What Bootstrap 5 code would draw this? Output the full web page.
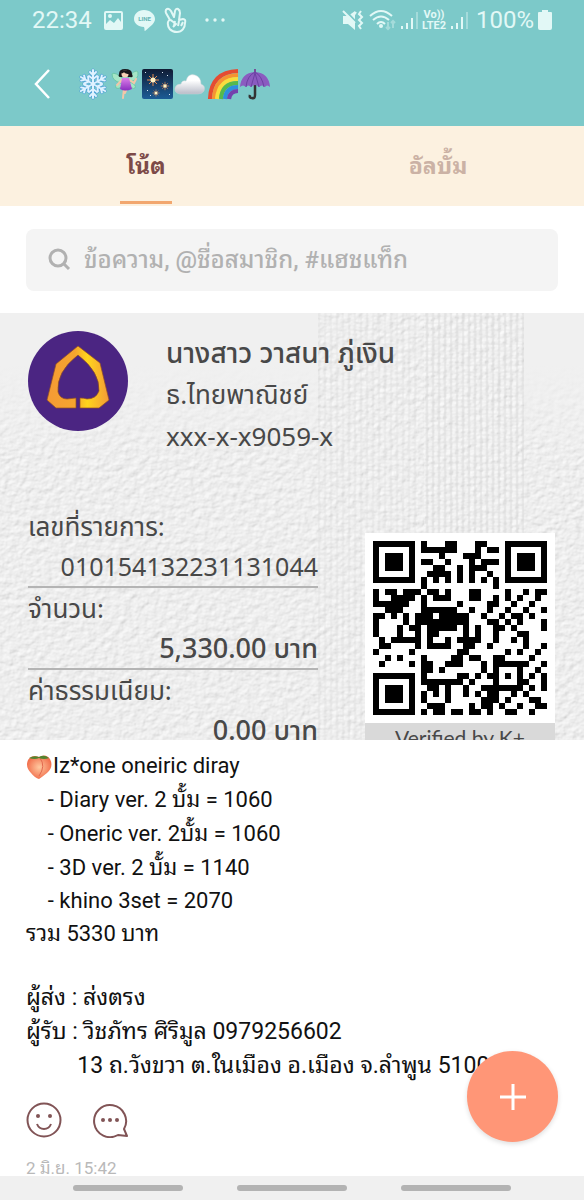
<!DOCTYPE html>
<html lang="th">
<head>
<meta charset="utf-8">
<meta name="viewport" content="width=device-width, initial-scale=1">
<title>โน้ต</title>
<link href="https://cdn.jsdelivr.net/npm/bootstrap@5.3.0/dist/css/bootstrap.min.css" rel="stylesheet">
<style>
  body { font-family: Roboto, "Noto Sans Thai Looped", "Droid Sans Thai", "Noto Sans Thai", "Noto Sans", sans-serif; font-size: 22px; color: #111; background: #fff; }
  .topbar { background: #7cc9c9; color: #e2f8f6; height: 126px; }
  .status { height: 40px; padding: 0 32px; font-size: 24px; line-height: 40px; }
  .alerts { margin-left: 12px; }
  .volte { font-size: 11px; line-height: 11px; font-weight: 700; }
  .room { height: 88px; padding: 0 32px; gap: 26px; }
  .tabs { background: #fcf1e0; height: 80px; }
  .tabs a { color: #cbb2a5; font-size: 23px; font-weight: 700; text-decoration: none; line-height: 82px; }
  .tabs a.active { color: #7d4a48; }
  .tabs a.active::after { content: ""; position: absolute; left: 50%; margin-left: -26px; bottom: 2px; width: 52px; height: 3px; background: #f2a76f; }
  .find { margin: 23px 26px 22px; height: 62px; background: #f4f4f4; border-radius: 8px; padding: 0 22px; }
  .find input { font-size: 24px; font-weight: 500; color: #777; }
  .find input::placeholder { color: #b1b1b1; opacity: 1; }
  .slip { height: 427px; background: #ececec; color: #484848; font-family: "Noto Sans", "Noto Sans Thai", sans-serif; font-size: 26px; overflow: hidden; }
  .paper { inset: 0; }
  .payee { padding: 18px 28px 0; gap: 38px; height: 193px; }
  .payee p { line-height: 42px; margin: 0; }
  .payee .who { font-size: 28px; }
  .facts { width: 290px; margin-left: 28px; }
  .facts dt, .facts dd { margin: 0; font-weight: 400; line-height: 40px; }
  .facts dd { text-align: right; border-bottom: 2px solid #b4b4b4; }
  .facts .ref { font-size: 25px; line-height: 40px; }
  .facts .fw-medium { font-size: 27px; }
  .code { width: 190px; margin: 27px 29px 0 0; }
  .code svg { background: #fff; }
  .code figcaption { background: #d9d9d9; font-size: 21px; line-height: 30px; font-family: Lato, sans-serif; }
  .note { padding: 9px 26px 0; }
  .note p { margin: 0; line-height: 34px; white-space: pre-wrap; }
  .note .latin { line-height: 32px; }
  .note .gap-line { line-height: 30px; }
  .note .parcel { font-size: 23px; white-space: pre; }
  .acts { gap: 31px; padding: 19px 26px 0; }
  .when { color: #b9b9b9; font-size: 17px; line-height: 22px; padding: 19px 26px 40px; }
  .fab { right: 26px; bottom: 58px; width: 91px; height: 91px; background: #ff9677; box-shadow: 0 2px 5px #0002; }
  .sysbar { height: 24px; background: #f0f0f0; }
  .sysbar span { width: 110px; height: 6px; border-radius: 3px; background: #b3b3b3; }
</style>
</head>
<body>
<header class="topbar">
  <div class="status d-flex align-items-center">
    <span>22:34</span>
    <svg class="alerts" width="84" height="26" viewBox="0 0 84 26" aria-hidden="true">
      <path fill="#e2f8f6" fill-rule="evenodd" d="M2 4h15a2 2 0 0 1 2 2v15a2 2 0 0 1-2 2H2a2 2 0 0 1-2-2V6a2 2 0 0 1 2-2zm0 2v11l4-4 4 3 4-5 3 4V6zm4 1a2 2 0 1 1 0 4 2 2 0 0 1 0-4z"/>
      <path fill="#e2f8f6" d="M40 3c6 0 11 4 11 9 0 4-4 7-10 12-1 0 0-2-1-4-6 0-10-4-10-8 0-5 4-9 10-9z"/>
      <text x="40.500" y="14" text-anchor="middle" font-size="6" font-weight="700" fill="#65b5b5">LINE</text>
      <path fill="none" stroke="#e2f8f6" stroke-width="2" stroke-linejoin="round" d="M66 13 62 6q-1-3 1-4t4 2l3 6 1-6q1-3 3-2t2 4l-1 7 4-1q3 0 2 4c0 5-3 9-8 9-6 0-10-4-9-10 1-3 3-2 4-1l4 3-3 3M71 14l-1 5M75 14l-1 5M79 15l-2 4"/>
    </svg>
    <svg class="ms-3" width="24" height="24" viewBox="0 0 24 24" fill="#e2f8f6" aria-hidden="true"><circle cx="3" cy="12" r="1.700"/><circle cx="11" cy="12" r="1.700"/><circle cx="19" cy="12" r="1.700"/></svg>
    <svg class="ms-auto" width="76" height="24" viewBox="0 0 76 24" fill="none" stroke="#e2f8f6" aria-hidden="true">
      <path fill="#e2f8f6" stroke="none" d="M1 8h5l7-5v19l-7-6H1z"/><path stroke="#7cc9c9" stroke-width="2" d="m2 1 12 13"/><path stroke-width="2" d="m1 3 12 12M19 3l-2 3 3 3-3 3 3 3-3 3 2 3"/><path stroke-width="2" d="M14 4l-2 3"/>
      <path stroke-width="2" d="M28 8q11-10 22 0M31 12q8-7 16 0M35 16q4-4 8 0"/><circle cx="39" cy="18" r="2" fill="#e2f8f6" stroke="none"/>
      <path stroke-width="2" opacity=".4" d="M46 14v7m-2-2 2 2 2-2M51 20v-7m-2 2 2-2 2 2"/>
      <path stroke-width="2" d="M60 18v3M65 15v6M70 10v11"/><path stroke-width="2" opacity=".4" d="M75 4v17"/>
    </svg>
    <span class="volte text-center ms-1">Vo))<br>LTE2</span>
    <svg class="ms-1" width="18" height="24" viewBox="0 0 18 24" stroke="#e2f8f6" stroke-width="2" aria-hidden="true"><path d="M2 18v3M7 15v6M12 9v12"/><path opacity=".4" d="M17 4v17"/></svg>
    <span class="ms-2">100%</span>
    <svg class="ms-1" width="14" height="20" viewBox="0 0 14 20" fill="#e2f8f6" aria-hidden="true"><path d="M4 0h6v2h3q1 0 1 1v15q0 2-2 2H2q-2 0-2-2V3q0-1 1-1h3z"/></svg>
  </div>
  <div class="room d-flex align-items-center">
    <button type="button" class="btn p-0 border-0 lh-1" aria-label="กลับ"><svg width="20" height="30" viewBox="0 0 20 30" fill="none" stroke="#fff" stroke-width="2.500"><path d="M17 1 4 15l13 14"/></svg></button>
    <svg width="194" height="32" viewBox="0 0 194 32" role="img" aria-label="❄️🧚🎇☁️🌈☂️">
      <defs><linearGradient id="sky" x2="0" y2="1"><stop stop-color="#101c35"/><stop offset="1" stop-color="#1b5c96"/></linearGradient>
      <linearGradient id="mist" x2="0" y2="1"><stop offset=".3" stop-color="#fff"/><stop offset="1" stop-color="#b9bcc8"/></linearGradient>
      <linearGradient id="dress" x2="0" y2="1"><stop stop-color="#dc7ee8"/><stop offset="1" stop-color="#8a2fc0"/></linearGradient>
      <g id="arm"><path d="M15 16V2M15 11l-4-3M15 11l4-3M15 7l-3-3M15 7l3-3"/></g>
      <g id="spark"><path d="M0-6V6M-6 0H6M-4-4 4 4M-4 4 4-4" stroke="#e58b4e"/><circle r="2.500" fill="#fff3c4"/></g></defs>
      <g stroke="#4a9ed8" stroke-width="3" stroke-linecap="round" fill="none"><use href="#arm"/><use href="#arm" transform="rotate(60 15 16)"/><use href="#arm" transform="rotate(120 15 16)"/><use href="#arm" transform="rotate(180 15 16)"/><use href="#arm" transform="rotate(240 15 16)"/><use href="#arm" transform="rotate(300 15 16)"/></g>
      <g stroke="#dff2ff" stroke-width="2" stroke-linecap="round" fill="none"><use href="#arm"/><use href="#arm" transform="rotate(60 15 16)"/><use href="#arm" transform="rotate(120 15 16)"/><use href="#arm" transform="rotate(180 15 16)"/><use href="#arm" transform="rotate(240 15 16)"/><use href="#arm" transform="rotate(300 15 16)"/></g>
      <path fill="#a5e5c6" stroke="#6cc7a8" d="M46 12Q37 3 34 6q0 7 9 9-7 2-5 5 4 2 9-5zM49 12q8-12 11-8 1 8-8 10 7 3 5 6-3 2-8-5z"/>
      <path stroke="#f2c7a8" stroke-width="2" fill="none" stroke-linecap="round" d="m45 11-6 6M50 11l6 4 2-4M46 20l-1 10M49 20l-2 5"/>
      <path fill="url(#dress)" d="M44 10h7l3 11q-7 3-12 0z"/><path fill="#18171c" d="M41 6q0-5 6-5 7 0 7 5 2 4-2 3H42q-2 0-1-3z"/><circle cx="47" cy="6" r="3.500" fill="#f7d0b5"/><path fill="#18171c" d="M43 5q1-4 8-2l1 3q-5 0-6-2-1 2-3 1z"/>
      <rect x="64" y="1" width="31" height="30" rx="2" fill="url(#sky)"/><path fill="#dbe9f5" d="M67 4h1v1h-1zM89 7h1v1h-1zM84 4h1v1h-1zM69 22h1v1h-1zM91 26h1v1h-1zM72 27h1v1h-1z"/>
      <use href="#spark" x="75" y="12"/><use href="#spark" transform="translate(87 18) scale(.7)"/><use href="#spark" transform="translate(78 25) scale(.6)"/>
      <path fill="url(#mist)" stroke="#c9d2d6" stroke-width=".5" d="M102 26q-6-1-5-6 1-4 6-4 1-4 5-3 2-8 9-6 6 2 6 9 5 2 3 7-2 3-6 3z"/>
      <g fill="none" stroke-width="4.200"><path stroke="#e54c32" d="M132 31Q133 4 160 3"/><path stroke="#f79332" d="M136 31Q137 8 160 7"/><path stroke="#f8dd3e" d="M139 31Q141 11 160 11"/><path stroke="#56b94c" d="M143 31Q144 15 160 15"/><path stroke="#2d8fdd" d="M147 31Q148 19 160 19"/><path stroke="#7441ad" d="M151 31Q152 23 160 23"/></g>
      <path stroke="#333" stroke-width="2.500" fill="none" d="M177 16v11q0 4-3 3-3 0-2-3"/><path stroke="#77509a" stroke-width="2" d="M177 1v5"/>
      <path fill="#8b5bc0" d="M162 19q1-14 15-15 14 1 15 15-3-3-5 0-3-3-6 0-4-4-8 0-3-3-5 0-3-3-6 0z"/><path stroke="#6b41a2" fill="none" d="M168 19q1-11 9-15 7 4 9 15M173 19l4-14 4 14"/>
    </svg>
  </div>
</header>

<nav class="tabs d-flex">
  <a href="#notes" class="active flex-fill w-50 text-center position-relative" aria-current="page">โน้ต</a>
  <a href="#albums" class="flex-fill w-50 text-center">อัลบั้ม</a>
</nav>

<main id="notes">
  <form class="find d-flex align-items-center" role="search">
    <svg class="flex-shrink-0" width="24" height="24" viewBox="0 0 24 24" fill="none" stroke="#b1b1b1" stroke-width="3" aria-hidden="true"><circle cx="10" cy="10" r="8"/><path d="m16 16 5 5"/></svg>
    <input type="search" class="form-control border-0 bg-transparent shadow-none p-0 ms-2 ps-1" aria-label="ค้นหา" placeholder="ข้อความ, @ชื่อสมาชิก, #แฮชแท็ก">
  </form>

  <article>
    <section class="slip position-relative">
      <svg class="paper position-absolute w-100 h-100" viewBox="0 0 584 427" preserveAspectRatio="none" aria-hidden="true">
        <defs>
          <filter id="plaster" x="0" y="0" width="100%" height="100%"><feTurbulence type="fractalNoise" baseFrequency=".14 .18" numOctaves="3" seed="4"/><feDiffuseLighting surfaceScale=".8" diffuseConstant="1.110" lighting-color="#f2f2f2"><feDistantLight azimuth="230" elevation="60"/></feDiffuseLighting></filter>
          <linearGradient id="rise" x2="0" y2="1"><stop offset=".12" stop-color="#f0f0f0"/><stop offset=".35" stop-color="#f0f0f0" stop-opacity="0"/></linearGradient>
          <pattern id="thread" width="6" height="7" patternUnits="userSpaceOnUse"><path d="M1 0v7" stroke="#d4d4d4"/><path d="M4 0v7" stroke="#fafafa"/><path d="M0 3h6" stroke="#dedede" opacity=".6"/></pattern>
        </defs>
        <rect width="584" height="427" filter="url(#plaster)"/>
        <rect width="318" height="427" fill="url(#rise)"/>
        <rect x="524" width="60" height="427" fill="url(#rise)"/>
        <rect x="318" width="100" height="427" fill="url(#thread)" opacity=".4"/>
        <rect x="424" width="100" height="427" fill="url(#thread)" opacity=".7"/>
      </svg>
      <div class="position-relative">
        <div class="payee d-flex">
          <svg class="flex-shrink-0" width="100" height="100" viewBox="0 0 100 100" role="img" aria-label="ธนาคารไทยพาณิชย์">
            <defs><linearGradient id="gold"><stop stop-color="#f59a35"/><stop offset=".45" stop-color="#f5a52e"/><stop offset=".65" stop-color="#ffd51c"/><stop offset="1" stop-color="#f29a37"/></linearGradient></defs>
            <circle cx="50" cy="50" r="50" fill="#4b2582"/>
            <path fill="url(#gold)" stroke="#94501f" stroke-width=".7" d="M50 15 72 32 81 69 71 77H52V67q4 0 7 1 9 0 12-8 1-19-21-36-22 17-20 37 2 7 9 7l9-1v10H28L19 69 28 33z"/>
          </svg>
          <div><p class="who fw-medium">นางสาว วาสนา ภู่เงิน</p><p>ธ.ไทยพาณิชย์</p><p>xxx-x-x9059-x</p></div>
        </div>
        <div class="d-flex justify-content-between">
          <dl class="facts mb-0">
            <dt>เลขที่รายการ:</dt><dd class="ref">010154132231131044</dd>
            <dt>จำนวน:</dt><dd class="fw-medium">5,330.00 บาท</dd>
            <dt>ค่าธรรมเนียม:</dt><dd class="fw-medium">0.00 บาท</dd>
          </dl>
          <figure class="code text-center">
            <svg class="d-block w-100" viewBox="-1.250 -1.250 31.500 31.500" role="img" aria-label="QR" shape-rendering="crispEdges"><path id="qr"/></svg>
            <figcaption>Verified by K+</figcaption>
          </figure>
        </div>
      </div>
    </section>

    <section class="note">
      <p><svg width="27" height="26" viewBox="0 0 27 26" role="img" aria-label="🍑"><defs><radialGradient id="peach"><stop stop-color="#ffc9a0"/><stop offset="1" stop-color="#f2724f"/></radialGradient></defs><path fill="url(#peach)" d="M13 3Q20-1 24 5q4 8-3 14-5 4-8 6-4-1-8-6-6-6-3-13 4-6 11-3z"/><path fill="none" stroke="#e2694f" d="M14 4q6 8-1 18"/><path fill="#53852f" d="M13 4Q9 6 3 4q5-3 10-1 5-3 10 1-5 2-10 0z"/></svg>Iz*one oneiric diray</p>
      <p>    - Diary ver. 2 บั้ม = 1060</p>
      <p>    - Oneric ver. 2บั้ม = 1060</p>
      <p>    - 3D ver. 2 บั้ม = 1140</p>
      <p class="latin">    - khino 3set = 2070</p>
      <p>รวม 5330 บาท</p>
      <p class="gap-line">&nbsp;</p>
      <p class="parcel">ผู้ส่ง : ส่งตรง</p>
      <p class="parcel">ผู้รับ : วิชภัทร ศิริมูล 0979256602</p>
      <p class="parcel">         13 ถ.วังขวา ต.ในเมือง อ.เมือง จ.ลำพูน 51000</p>
    </section>
    <div class="acts d-flex">
      <button type="button" class="btn p-0 border-0 lh-1" aria-label="ถูกใจ"><svg width="36" height="36" viewBox="0 0 36 36" fill="none" stroke="#815456" stroke-width="2"><circle cx="18" cy="18" r="16.500"/><path d="M11 22q2 5 7 5t7-5"/><g fill="#815456" stroke="none"><circle cx="12" cy="14" r="2"/><circle cx="24" cy="14" r="2"/></g></svg></button>
      <button type="button" class="btn p-0 border-0 lh-1" aria-label="แสดงความคิดเห็น"><svg width="36" height="36" viewBox="0 0 36 36" fill="none" stroke="#815456" stroke-width="2"><path stroke-linejoin="round" d="M31 27l3 7-9-1A16 16 0 1 1 31 27z"/><g fill="#815456" stroke="none"><circle cx="10" cy="18" r="2"/><circle cx="17" cy="18" r="2"/><circle cx="24" cy="18" r="2"/></g></svg></button>
    </div>
    <div class="when">2 มิ.ย. 15:42</div>
  </article>
</main>

<button type="button" class="fab btn rounded-circle border-0 p-0 position-fixed" aria-label="เพิ่ม"><svg width="28" height="28" viewBox="0 0 28 28" stroke="#fff" stroke-width="3"><path d="M14 1v26M1 14h26"/></svg></button>
<div class="sysbar fixed-bottom d-flex justify-content-center align-items-center"><div class="d-flex justify-content-between w-75"><span></span><span></span><span></span></div></div>

<script src="https://cdn.jsdelivr.net/npm/bootstrap@5.3.0/dist/js/bootstrap.bundle.min.js"></script>
<script>
  // One string per row of QR modules; X is a dark module.
  const rows = [
    "XXXXXXX.X...XX...XX...XXXXXXX",
    "X.....X.XXXXXX...X.XX.X.....X",
    "X.XXX.X....X...XXX....X.XXX.X",
    "X.XXX.X.XX..X...X.XXX.X.XXX.X",
    "X.XXX.X...XX..X.XXX...X.XXX.X",
    "X.....X..XXXX.X.X..X..X.....X",
    "XXXXXXX.X.X.X.X.X.X.X.XXXXXXX",
    "........X...........X........",
    "X.XX.XXX.XX.X...XX....X..X.XX",
    "X..XXXX.X.XXX...XX..X.X.X..X.",
    "XXXXXX..X.....X....XX..X..X..",
    "..XXX...XXXXXX..X..X..X..X..X",
    "XX.X.X.XXX.XXXXX..X..X.XX.X..",
    "X....X.XXXXXXXXX...XX.X.X...X",
    "X...X.XX.XXXXX.X.X..XX.X....X",
    "X...X..X.XX....X.X..X...XX...",
    ".X.XXXXX.X..X.XXXX..X..X.X...",
    ".XX....X.XXXX..XX..X.....X..X",
    "X.....X.......XX......X.X..X.",
    "..X.X...X....XX.XX..XX....X..",
    ".X....X.XX..XXX...X.XXXXXX..X",
    "........XX.X......X.X...X..X.",
    "XXXXXXX.X.....XX.X.XX.X.X.X.X",
    "X.....X.XXXXXXX.X...X...XX..X",
    "X.XXX.X..XX.X..X..XXXXXXX.X.X",
    "X.XXX.X.X.X.X..X.X.XX..X.X...",
    "X.XXX.X.X...X.....XXX.X...XX.",
    "X.....X..XXX....X.XX.X..X..XX",
    "XXXXXXX.X.XX.XX.XX.X..XX..X.."
  ];
  document.getElementById("qr").setAttribute("d", rows.map((row, y) =>
    [...row].map((m, x) => m === "X" ? `M${x} ${y}h1v1h-1z` : "").join("")).join(""));
</script>
</body>
</html>
